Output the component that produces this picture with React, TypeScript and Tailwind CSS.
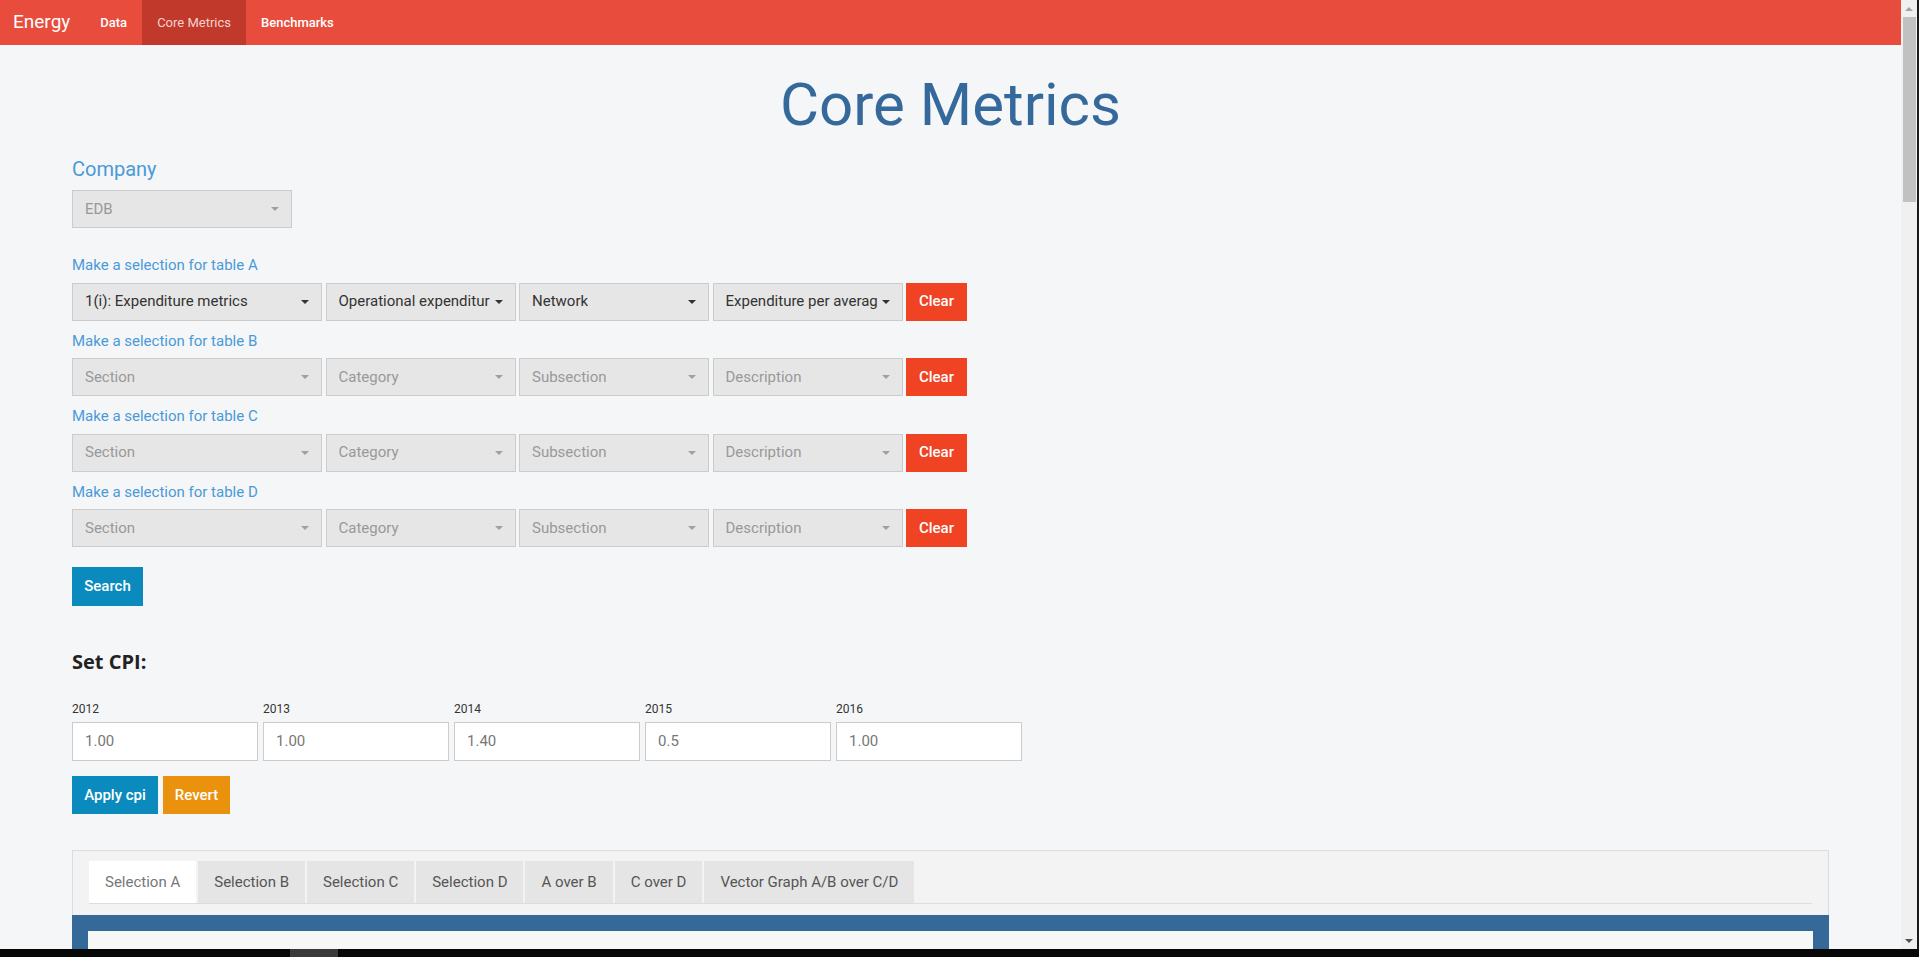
import React from "react";

function Caret({ muted }: { muted?: boolean }) {
  return (
    <span
      className={`inline-block w-0 h-0 shrink-0 border-x-[4px] border-x-transparent border-t-[4px] ${
        muted ? "border-t-[#a0a0a0]" : "border-t-[#333333]"
      }`}
    />
  );
}

function Select({ text, muted, className }: { text: string; muted?: boolean; className: string }) {
  return (
    <div
      className={`h-[38px] shrink-0 flex items-center justify-between bg-[#e6e6e6] border border-[#cccccc] pl-[12px] pr-[12px] text-[15px] ${
        muted ? "text-[#999999]" : "text-[#333333]"
      } ${className}`}
    >
      <span className="whitespace-nowrap overflow-hidden min-w-0 mr-[4px]">{text}</span>
      <Caret muted={muted} />
    </div>
  );
}

const tables = [
  {
    label: "A",
    items: ["1(i): Expenditure metrics", "Operational expenditur", "Network", "Expenditure per averag"],
    muted: false,
  },
  { label: "B", items: ["Section", "Category", "Subsection", "Description"], muted: true },
  { label: "C", items: ["Section", "Category", "Subsection", "Description"], muted: true },
  { label: "D", items: ["Section", "Category", "Subsection", "Description"], muted: true },
];

const years = [
  { y: "2012", v: "1.00" },
  { y: "2013", v: "1.00" },
  { y: "2014", v: "1.40" },
  { y: "2015", v: "0.5" },
  { y: "2016", v: "1.00" },
];

const tabs = ["Selection A", "Selection B", "Selection C", "Selection D", "A over B", "C over D", "Vector Graph A/B over C/D"];

export default function App() {
  return (
    <div className="h-[957px] w-full flex flex-col overflow-hidden bg-black font-['Roboto',sans-serif]">
      <div className="flex flex-1 min-h-0">
        <div className="flex-1 min-w-0 bg-[#f5f6f8] overflow-hidden">
          <nav className="h-[45px] bg-[#e74c3c] flex items-stretch">
            <div className="flex items-center pl-[13px] pr-[15px] text-[19px] text-white">Energy</div>
            <div className="flex items-center px-[15px] text-[13px] font-medium text-white">Data</div>
            <div className="flex items-center px-[15px] text-[13px] bg-[#c0392b] text-[#f6d2cb]">Core Metrics</div>
            <div className="flex items-center px-[15px] text-[13px] font-medium text-white">Benchmarks</div>
          </nav>

          <h1 className="mt-[26px] text-center text-[60px] leading-[68px] text-[#36699b]">Core Metrics</h1>

          <div className="px-[72px]">
            <div className="mt-[16px] text-[20px] leading-[28px] text-[#4a9ad7]">Company</div>
            <Select text="EDB" muted className="mt-[7px] w-[220px]" />

            <div className="mt-[27px] flex flex-col gap-[10px]">
              {tables.map((t) => (
                <div key={t.label}>
                  <div className="text-[15px] leading-[20px] text-[#4a9ad7]">Make a selection for table {t.label}</div>
                  <div className="mt-[7.5px] flex gap-[3.5px]">
                    <Select text={t.items[0]} muted={t.muted} className="w-[250px]" />
                    <Select text={t.items[1]} muted={t.muted} className="w-[190px]" />
                    <Select text={t.items[2]} muted={t.muted} className="w-[190px]" />
                    <Select text={t.items[3]} muted={t.muted} className="w-[190px]" />
                    <button className="h-[38px] w-[61px] shrink-0 bg-[#ef4323] text-white text-[15px] font-medium">
                      Clear
                    </button>
                  </div>
                </div>
              ))}
            </div>

            <button className="mt-[20px] h-[39px] w-[71px] bg-[#0b8bbd] text-white text-[15px] font-medium">
              Search
            </button>

            <div className="mt-[42px] font-['Open_Sans',sans-serif] font-bold text-[20px] leading-[28px] text-[#222222]">
              Set CPI:
            </div>

            <div className="mt-[25px] flex gap-[5px]">
              {years.map((y) => (
                <div key={y.y} className="w-[186px]">
                  <div className="text-[12px] leading-[16px] text-[#333333]">{y.y}</div>
                  <div className="mt-[5px] h-[39px] bg-white border border-[#cccccc] flex items-center pl-[12px] text-[15px] text-[#777777]">
                    {y.v}
                  </div>
                </div>
              ))}
            </div>

            <div className="mt-[15px] flex gap-[5px]">
              <button className="h-[38px] w-[86px] bg-[#0b8bbd] text-white text-[15px] font-medium">Apply cpi</button>
              <button className="h-[38px] w-[67px] bg-[#ea910e] text-white text-[15px] font-medium">Revert</button>
            </div>

            <div className="mt-[36px]">
              <div className="border border-b-0 border-[#dddddd] bg-[#f3f3f3] pt-[10px] px-[16px] pb-[11px]">
                <div className="flex gap-[2px] border-b border-[#dddddd]">
                  {tabs.map((t, i) => (
                    <div
                      key={t}
                      className={`h-[42px] px-[16px] flex items-center text-[15px] ${
                        i === 0 ? "bg-white text-[#777777]" : "bg-[#e5e5e5] text-[#555555]"
                      }`}
                    >
                      {t}
                    </div>
                  ))}
                </div>
              </div>
              <div className="bg-[#35699a] px-[16px] pt-[16px]">
                <div className="h-[120px] bg-[#f7f7f5]" />
              </div>
            </div>
          </div>
        </div>

        <div className="w-[18px] flex">
          <div className="w-[16px] bg-[#f0f0f0] flex flex-col items-center">
            <div className="h-[17px] flex items-center justify-center">
              <span className="inline-block w-0 h-0 border-x-[4px] border-x-transparent border-b-[4px] border-b-[#a3a3a3]" />
            </div>
            <div className="w-[13px] h-[185px] bg-[#c1c1c1]" />
            <div className="flex-1" />
            <div className="h-[17px] flex items-center justify-center">
              <span className="inline-block w-0 h-0 border-x-[4px] border-x-transparent border-t-[4px] border-t-[#505050]" />
            </div>
          </div>
          <div className="w-[2px] bg-[#1a1a1a]" />
        </div>
      </div>
      <div className="h-[8px] bg-[#070707] flex">
        <div className="w-[290px]" />
        <div className="w-[48px] bg-[#3a3a3a]" />
      </div>
    </div>
  );
}
